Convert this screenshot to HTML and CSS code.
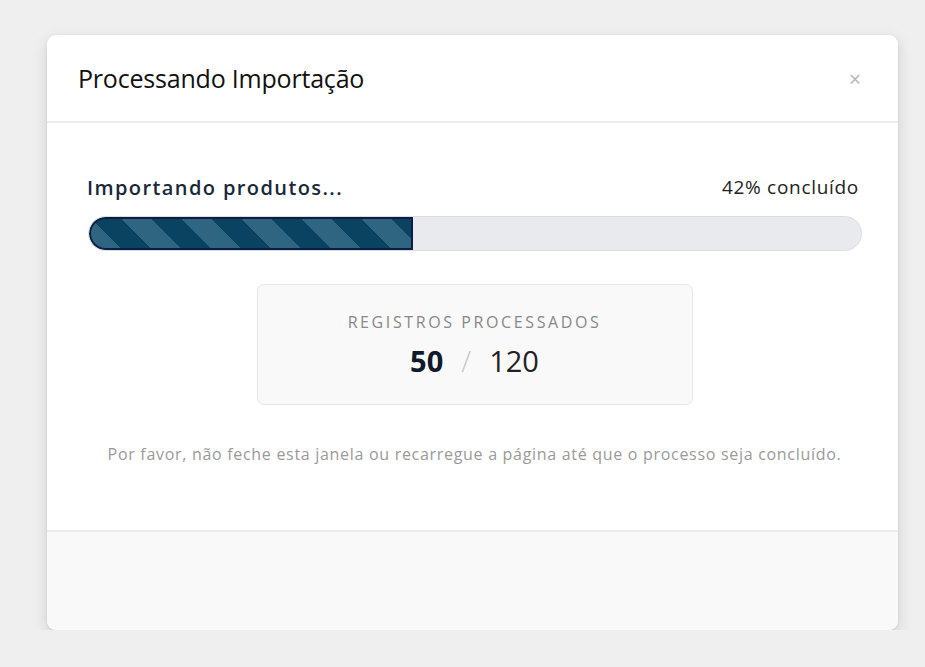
FILE: index.html
```html
<!DOCTYPE html>
<html lang="pt-BR">
<head>
<meta charset="utf-8">
<title>Processando Importação</title>
<link rel="stylesheet" href="styles.css">
</head>
<body>
<div class="page">
  <div class="modal">
    <div class="modal-header">
      <h2 class="modal-title">Processando Importação</h2>
      <span class="close">×</span>
    </div>
    <div class="modal-body">
      <div class="progress-head">
        <span class="progress-label">Importando produtos...</span>
        <span class="progress-pct">42% concluído</span>
      </div>
      <div class="track">
        <div class="fill" style="width:42%"></div>
      </div>
      <div class="stats">
        <div class="stats-label">REGISTROS PROCESSADOS</div>
        <div class="stats-count"><span class="done">50</span><span class="sep">/</span><span class="total">120</span></div>
      </div>
      <p class="note">Por favor, não feche esta janela ou recarregue a página até que o processo seja concluído.</p>
    </div>
    <div class="modal-footer"></div>
  </div>
</div>
</body>
</html>
```
FILE: styles.css
```css
html, body {
  margin: 0;
  padding: 0;
  background: #efefef;
  font-family: "Open Sans", "Noto Sans", sans-serif;
}
.page {
  padding: 35px 27px 0 47px;
}
.modal {
  width: 851px;
  background: #fff;
  border-radius: 9px;
  box-shadow: 0 5px 16px rgba(0,0,0,0.13), 0 1px 3px rgba(0,0,0,0.08);
  overflow: hidden;
}
.modal-header {
  height: 86px;
  border-bottom: 2px solid #ebebeb;
  display: flex;
  align-items: center;
  justify-content: space-between;
  padding: 0 37px 0 31px;
}
.modal-title {
  margin: 0;
  font-size: 25px;
  font-weight: 500;
  color: #111;
  letter-spacing: -0.2px;
}
.close {
  color: #b5b5b5;
  font-size: 21px;
  line-height: 1;
  margin-top: 2px;
}
.modal-body {
  padding: 52px 36px 0 40px;
  height: 409px;
  box-sizing: border-box;
  border-bottom: 2px solid #ebebeb;
}
.progress-head {
  display: flex;
  justify-content: space-between;
  align-items: center;
  padding: 0 3px 0 0;
  height: 24px;
}
.progress-label {
  font-size: 20px;
  font-weight: 600;
  color: #182838;
  letter-spacing: 1.4px;
}
.progress-pct {
  font-size: 19px;
  color: #222;
  letter-spacing: 0.7px;
}
.track {
  margin-top: 17px;
  height: 35px;
  box-sizing: border-box;
  border-radius: 18px;
  background: #e9eaee;
  border: 1px solid #dcdde2;
  overflow: hidden;
  margin-left: 1px;
}
.fill {
  height: 100%;
  box-sizing: border-box;
  border: 2px solid #0b1f45;
  border-radius: 18px 0 0 18px;
  background-color: #0a4262;
  background-image: repeating-linear-gradient(45deg, #2f6581 0 21.2px, transparent 21.2px 42.4px);
}
.stats {
  width: 436px;
  height: 121px;
  box-sizing: border-box;
  margin: 33px auto 0;
  background: #f9f9f9;
  border: 1px solid #e6e6e6;
  border-radius: 7px;
  display: flex;
  flex-direction: column;
  align-items: center;
  padding-top: 26px;
}
.stats-label {
  font-size: 16px;
  letter-spacing: 2.6px;
  color: #888;
}
.stats-count {
  margin-top: 8px;
  font-size: 29px;
  color: #222;
  display: flex;
  align-items: baseline;
}
.done {
  font-weight: 700;
  color: #0f1a2a;
}
.sep {
  color: #c8c8c8;
  margin: 0 18px;
  font-weight: 300;
}
.note {
  margin: 38px 0 0;
  text-align: center;
  font-size: 16px;
  color: #9a9a9a;
  letter-spacing: 0.7px;
  white-space: nowrap;
}
.modal-footer {
  height: 98px;
  background: #f9f9f9;
}
```
